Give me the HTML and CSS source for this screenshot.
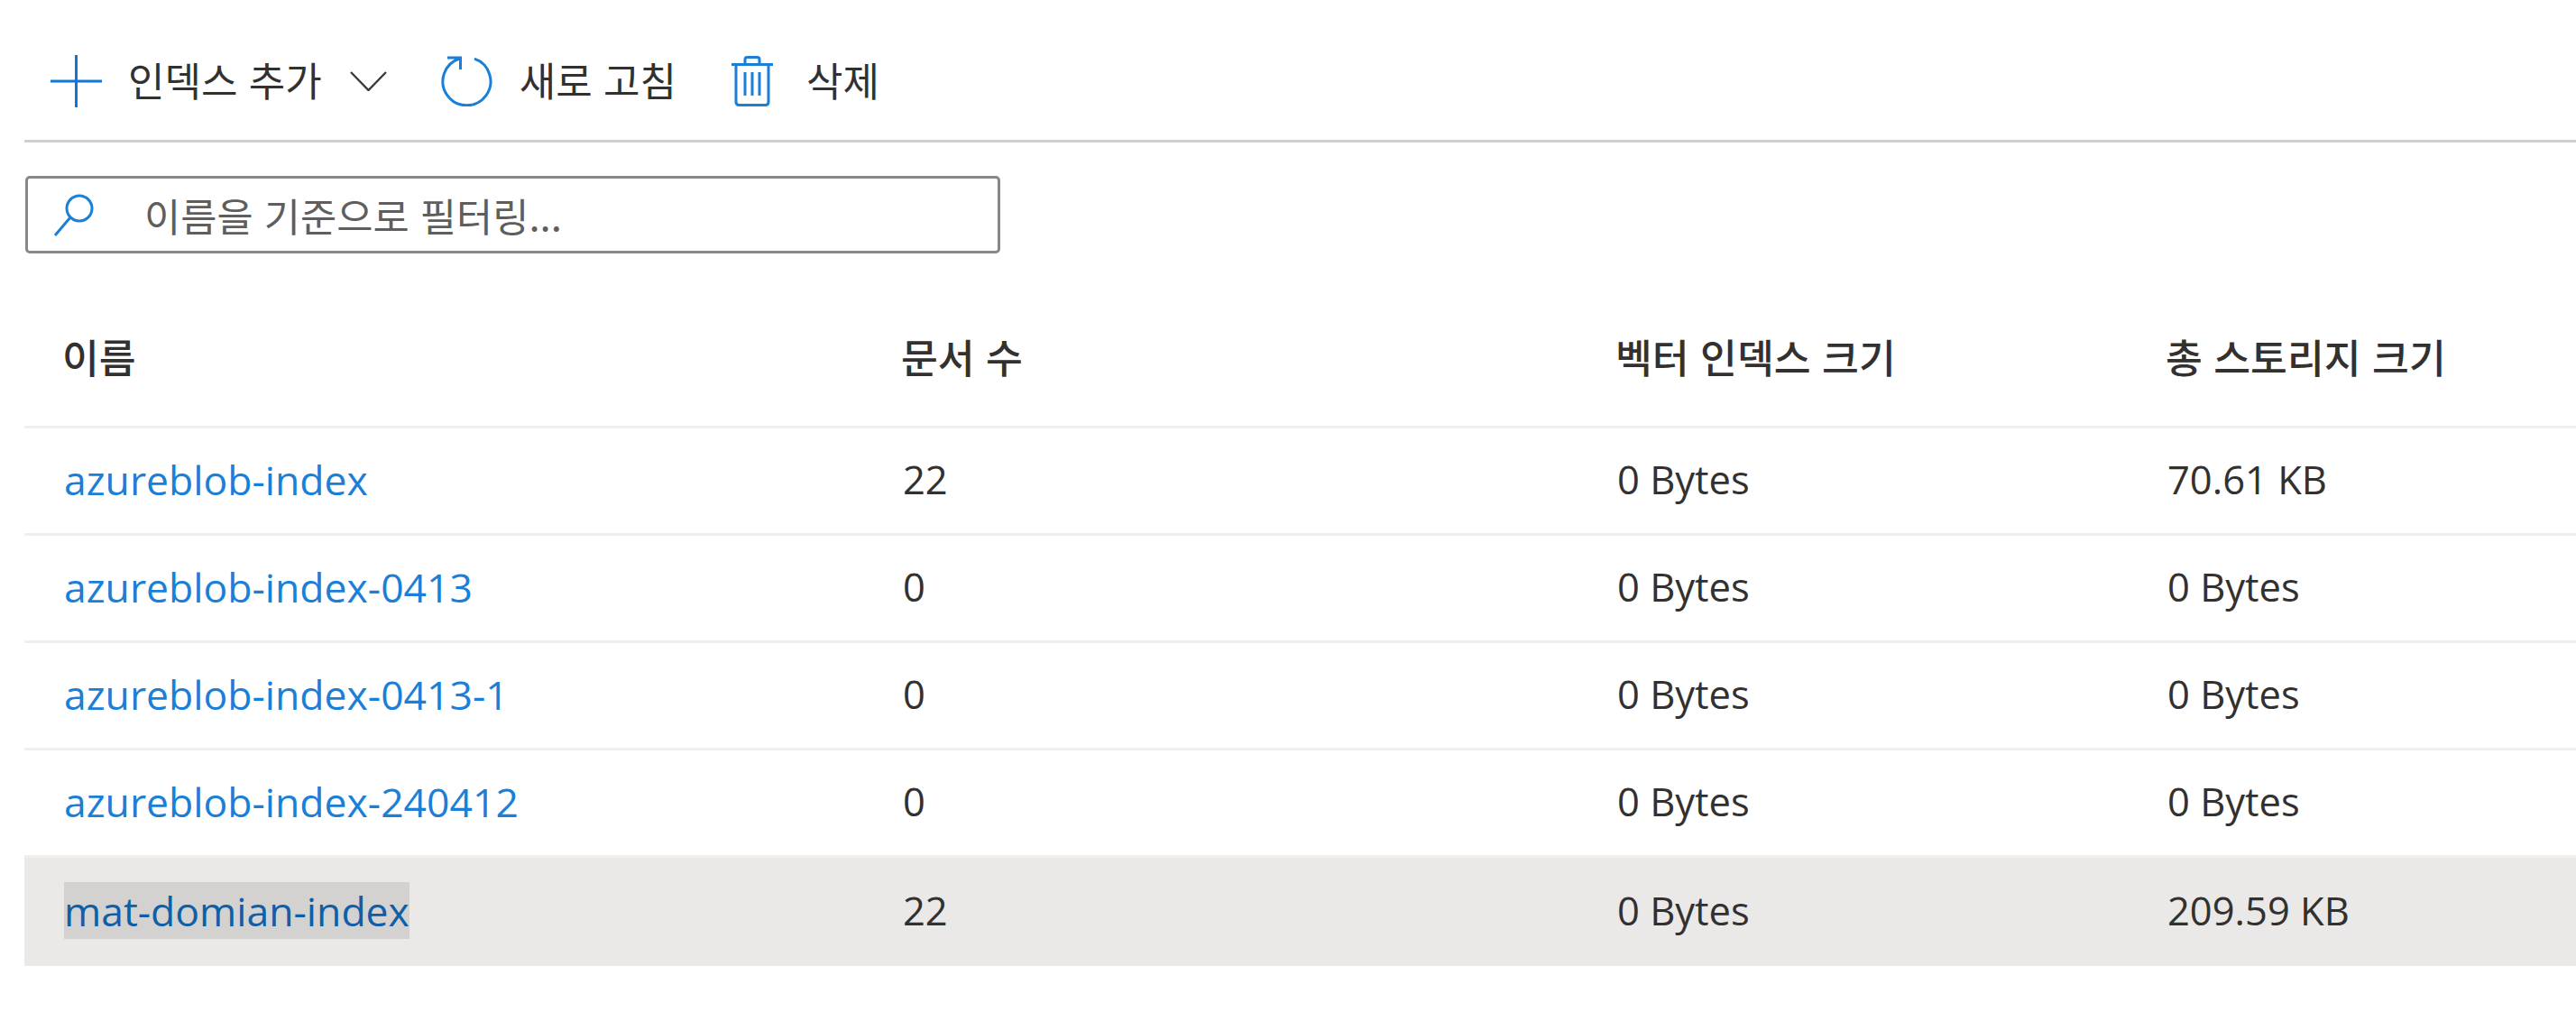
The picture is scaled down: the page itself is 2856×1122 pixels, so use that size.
FILE: index.html
```html
<!DOCTYPE html>
<html lang="ko">
<head>
<meta charset="utf-8">
<title>인덱스</title>
<link rel="stylesheet" href="styles.css">
</head>
<body>
<div class="page">
  <div class="toolbar">
    <button class="tool tool-add">
      <svg class="ico ico-plus" viewBox="0 0 57 58"><path d="M0 29H57M28.5 0V58" fill="none" stroke="#0f78d4" stroke-width="3"/></svg>
      <span class="tool-label">인덱스 추가</span>
      <svg class="ico ico-chev" viewBox="0 0 41 22"><path d="M1 1L20.5 21L40 1" fill="none" stroke="#3b3a39" stroke-width="2.4"/></svg>
    </button>
    <button class="tool tool-refresh">
      <svg class="ico ico-refresh" viewBox="0 0 57 56"><path d="M37 3.2A26.500 26.500 0 1 1 20.500 3M7 2H21.500V15" fill="none" stroke="#1b7fd8" stroke-width="3"/></svg>
      <span class="tool-label">새로 고침</span>
    </button>
    <button class="tool tool-del">
      <svg class="ico ico-trash" viewBox="0 0 46 56"><path d="M0 9.5H46M5 9.5V51Q5 54.5 8.5 54.5H37.500Q41 54.500 41 51V9.500M15 9V4Q15 1.500 17.500 1.500H28.500Q31 1.500 31 4V9M15 18V44M23 18V44M31 18V44" fill="none" stroke="#1b7fd8" stroke-width="3"/></svg>
      <span class="tool-label">삭제</span>
    </button>
  </div>
  <div class="search">
    <svg class="ico ico-search" viewBox="0 0 45 47"><circle cx="29" cy="16" r="14" fill="none" stroke="#1b7fd8" stroke-width="3"/><path d="M19 26L2 46" fill="none" stroke="#1b7fd8" stroke-width="3"/></svg>
    <span class="placeholder">이름을 기준으로 필터링...</span>
  </div>
  <div class="table">
    <div class="row head"><div class="th">이름</div><div class="th">문서 수</div><div class="th">벡터 인덱스 크기</div><div class="th">총 스토리지 크기</div></div>
    <div class="row"><div><a class="link">azureblob-index</a></div><div>22</div><div>0 Bytes</div><div>70.61 KB</div></div>
    <div class="row"><div><a class="link">azureblob-index-0413</a></div><div>0</div><div>0 Bytes</div><div>0 Bytes</div></div>
    <div class="row"><div><a class="link">azureblob-index-0413-1</a></div><div>0</div><div>0 Bytes</div><div>0 Bytes</div></div>
    <div class="row"><div><a class="link">azureblob-index-240412</a></div><div>0</div><div>0 Bytes</div><div>0 Bytes</div></div>
    <div class="row selected"><div><a class="link">mat-domian-index</a></div><div>22</div><div>0 Bytes</div><div>209.59 KB</div></div>
  </div>
</div>
</body>
</html>
```
FILE: styles.css
```css
html, body { margin: 0; padding: 0; background: #fff; }
body {
  font-family: "Open Sans", "Noto Sans CJK KR", sans-serif;
  font-size: 43.500px;
  color: #323130;
  width: 2856px;
  height: 1122px;
  overflow: hidden;
}
.page { padding-left: 27px; }
.toolbar {
  display: flex;
  align-items: center;
  height: 155px;
  padding: 0 0 0 29px;
  box-sizing: content-box;
  border-bottom: 3px solid #cfcfcf;
}
.tool {
  display: flex;
  align-items: center;
  background: none;
  border: 0;
  padding: 0;
  margin: 0;
  font: inherit;
  font-family: "Noto Sans CJK KR", sans-serif;
  color: inherit;
  font-size: 44px;
  line-height: 58px;
  position: relative;
  top: 12px;
}
.tool-label { position: relative; top: -2px; }
.ico { display: block; flex: none; }
.ico-plus { width: 57px; height: 58px; margin-right: 29px; }
.ico-chev { width: 41px; height: 22px; margin-left: 31px; }
.tool-refresh { margin-left: 60px; }
.ico-refresh { width: 57px; height: 56px; margin-right: 30px; }
.tool-del { margin-left: 61px; }
.ico-trash { width: 46px; height: 56px; margin-right: 37px; }
.search {
  display: flex;
  align-items: center;
  box-sizing: border-box;
  width: 1081px;
  height: 86px;
  margin: 37px 0 0 1px;
  border: 3px solid #8a8886;
  border-radius: 5px;
  padding-left: 28px;
}
.ico-search { width: 45px; height: 47px; margin-right: 56px; }
.placeholder {
  font-family: "Noto Sans CJK KR", sans-serif;
  font-size: 43.700px;
  color: #605e5c;
}
.row {
  display: grid;
  grid-template-columns: 930px 792px 610px 1fr;
  align-items: center;
  box-sizing: content-box;
  height: 112px;
  padding: 0 0 4px 44px;
  border-bottom: 3px solid #f0efee;
  white-space: nowrap;
}
.head {
  height: 191px;
  padding-bottom: 0;
  font-family: "Noto Sans CJK KR", sans-serif;
  font-size: 44.400px;
  font-weight: 500;
}
.th { padding-top: 36px; margin-left: -2px; }
.link { color: #1b7fd8; font-size: 44.500px; }
.selected {
  height: 116px;
  background: #ebe9e8;
  border-bottom: 0;
}
.selected .link {
  display: inline-block;
  height: 63px;
  line-height: 63px;
  background: #d3d2d1;
  color: #0f5ea8;
}
```
